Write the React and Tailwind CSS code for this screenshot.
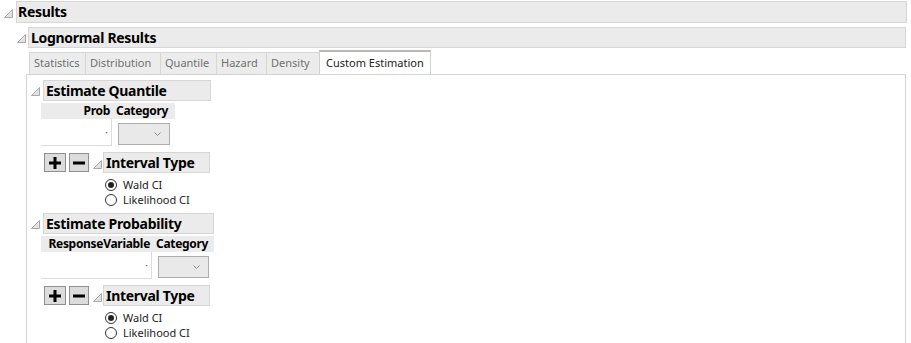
import React from 'react';

const Disclosure = ({ className = '' }) => (
  <svg width="9" height="9" viewBox="0 0 9 9" className={className}>
    <polygon points="8.5,0.5 8.5,8.5 0.5,8.5" fill="#e2e2e2" stroke="#a8a8a8" strokeWidth="1" />
  </svg>
);

const Header = ({ children, className = '' }) => (
  <div className={`flex items-center whitespace-nowrap bg-[#ebebeb] border border-[#d6d6d6] font-bold text-[14px] tracking-[-0.3px] text-black leading-none ${className}`}>
    {children}
  </div>
);

const Dropdown = ({ className = '' }) => (
  <div className={`flex items-center justify-end pr-[8px] bg-[#e9e9e9] border border-[#adadad] ${className}`}>
    <svg width="7" height="5" viewBox="0 0 7 5">
      <polyline points="0.5,0.5 3.5,3.5 6.5,0.5" fill="none" stroke="#888" strokeWidth="1" />
    </svg>
  </div>
);

const PlusMinus = () => (
  <div className="flex gap-[3px]">
    <div className="w-[22px] h-[19px] bg-[#dcdcdc] border border-[#8f8f8f] flex items-center justify-center">
      <svg width="12" height="12" viewBox="0 0 12 12">
        <rect x="4.5" y="0" width="3" height="12" fill="#000" />
        <rect x="0" y="4.5" width="12" height="3" fill="#000" />
      </svg>
    </div>
    <div className="w-[20px] h-[19px] bg-[#dcdcdc] border border-[#8f8f8f] flex items-center justify-center">
      <svg width="12" height="12" viewBox="0 0 12 12">
        <rect x="0" y="4.5" width="12" height="3" fill="#000" />
      </svg>
    </div>
  </div>
);

const Radio = ({ checked, label }) => (
  <div className="flex items-center h-[15px]">
    <div className="w-[12px] h-[12px] rounded-full border border-[#333] bg-white flex items-center justify-center">
      {checked && <div className="w-[6px] h-[6px] rounded-full bg-[#222]" />}
    </div>
    <span className="ml-[6px] text-[11px] leading-none text-[#222] whitespace-nowrap">{label}</span>
  </div>
);

const IntervalType = () => (
  <div className="flex items-start">
    <PlusMinus />
    <Disclosure className="ml-[4px] mt-[7px]" />
    <div className="ml-[1px]">
      <Header className="w-[107px] h-[21px] pl-[2px] -mt-[1px]">Interval Type</Header>
      <div className="mt-[4px] ml-[2px] flex flex-col">
        <Radio checked label="Wald CI" />
        <Radio label="Likelihood CI" />
      </div>
    </div>
  </div>
);

const Tab = ({ children, active, className = '' }) => (
  <div
    className={
      active
        ? `h-[24px] px-[6px] flex items-center whitespace-nowrap bg-white border border-b-0 border-[#d0d0d0] border-t-[#b8b8b8] border-t-2 text-[11px] text-[#222] ${className}`
        : `h-[22px] px-[4px] flex items-center whitespace-nowrap bg-[#ececec] border border-b-0 border-[#d6d6d6] -mr-px text-[11px] text-[#707070] ${className}`
    }
  >
    {children}
  </div>
);

export default function App() {
  return (
    <div className="w-[911px] h-[343px] bg-white overflow-hidden" style={{ fontFamily: '"Noto Sans", "Open Sans", sans-serif' }}>
      <div className="flex items-center pt-[1px]">
        <Disclosure className="ml-[4px] mt-[2px]" />
        <Header className="ml-[3px] w-[891px] h-[22px] pl-[1px]">Results</Header>
      </div>

      <div className="flex items-center mt-[4px]">
        <Disclosure className="ml-[17px] mt-[2px]" />
        <Header className="ml-[2px] w-[878px] h-[21px] pl-[2px]">Lognormal Results</Header>
      </div>

      <div className="flex items-end mt-[3px] ml-[29px] h-[23px]">
        <Tab className="w-[57px]">Statistics</Tab>
        <Tab className="w-[76px]">Distribution</Tab>
        <Tab className="w-[57px]">Quantile</Tab>
        <Tab className="w-[51px]">Hazard</Tab>
        <Tab className="w-[54px]">Density</Tab>
        <Tab active className="w-[112px]">Custom Estimation</Tab>
      </div>

      <div className="ml-[26px] w-[880px] h-[300px] border border-b-0 border-[#d4d4d4] pt-[5px] pl-[4px]">
        <div className="flex items-center">
          <Disclosure className="mt-[2px]" />
          <Header className="ml-[3px] w-[168px] h-[21px] pl-[2px]">Estimate Quantile</Header>
        </div>
        <div className="ml-[10px] mt-[2px] flex bg-[#ebebeb] w-[134px] h-[16px] items-center text-[12px] tracking-[-0.3px] font-bold text-black whitespace-nowrap">
          <span className="w-[70px] text-right pr-[1px]">Prob</span>
          <span className="ml-[5px]">Category</span>
        </div>
        <div className="ml-[10px] flex">
          <div className="w-[71px] h-[27px] border-r border-b border-[#dcdcdc] flex items-center justify-end pr-[3px] text-[10px] text-[#555]">·</div>
          <Dropdown className="ml-[6px] mt-[4px] w-[52px] h-[22px]" />
        </div>
        <div className="ml-[13px] mt-[7px]">
          <IntervalType />
        </div>

        <div className="flex items-center mt-[6px]">
          <Disclosure className="mt-[2px]" />
          <Header className="ml-[3px] w-[171px] h-[21px] pl-[2px]">Estimate Probability</Header>
        </div>
        <div className="ml-[10px] mt-[2px] flex bg-[#ebebeb] w-[173px] h-[16px] items-center text-[12px] tracking-[-0.3px] font-bold text-black whitespace-nowrap">
          <span className="w-[110px] text-right pr-[1px]">ResponseVariable</span>
          <span className="ml-[5px]">Category</span>
        </div>
        <div className="ml-[10px] flex">
          <div className="w-[111px] h-[27px] border-r border-b border-[#dcdcdc] flex items-center justify-end pr-[3px] text-[10px] text-[#555]">·</div>
          <Dropdown className="ml-[6px] mt-[4px] w-[51px] h-[22px]" />
        </div>
        <div className="ml-[13px] mt-[7px]">
          <IntervalType />
        </div>
      </div>
    </div>
  );
}
